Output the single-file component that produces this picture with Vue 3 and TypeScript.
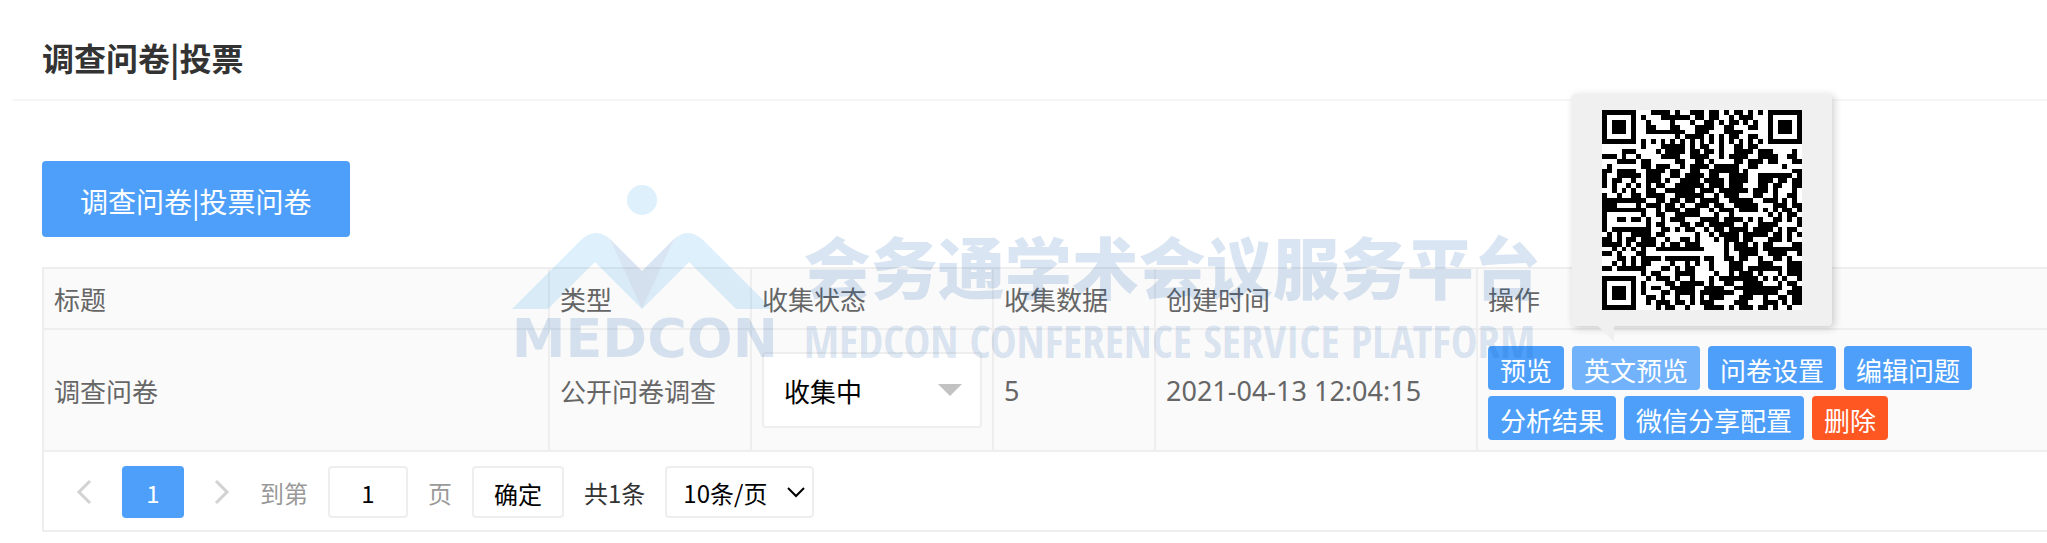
<script setup lang="ts">
import { ref } from 'vue'

const status = ref('收集中')
const pageSize = ref('10条/页')
const page = ref('1')

const headers = ['标题', '类型', '收集状态', '收集数据', '创建时间', '操作']

// One string per row of modules, # is dark
const qrRows: string[] = [
  '#######...####.#..###.##.#.##.#.#.#######',
  '#.....#.#...######.##.##..#.###...#.....#',
  '#.###.#..#....#...#..##.#.##.#.#..#.###.#',
  '#.###.#..##...##...####..##...##..#.###.#',
  '#.###.#..########..###...####.....#.###.#',
  '#.....#........#.####.#.#.##..##..#.....#',
  '#######.#.#.#.#.#.#.#.#.#.#.#.#.#.#######',
  '........#...#####.#.##..#..##.##.........',
  '....###....#.####.##.##.#..####.###....#.',
  '###.#..#....####..####..#.####..####..##.',
  '...####.##.....##..##.#....##.###.##...##',
  '.#......##.###..#.####.#####..##.....#...',
  '##.####..####.##..##..######.#.........##',
  '#..#####.###..##.####.##..####..#######.#',
  '#.##..#..###.#..####.####.####..###.##.##',
  '#.#..#.#.#.##..######.###.###...##.##..##',
  '..#.#.#..##..######.###.######.###.#...#.',
  '#..#..##.####..######..#.###...##..#..##.',
  '#########..##.##.##.####..#####..###.#.#.',
  '###....#.###.##.#..###.##..#####...###.##',
  '#########..#.###.###..#.###.####.#.#.##.#',
  '#.......#..##..#####...#..#.......#.#.##.',
  '#..##.##.#..#.###...####.####.#.#..##.#.#',
  '#........#.##...##.##.#####..#..####....#',
  '#.########..##.#.##..#.##.####.####.#.##.',
  '.#.#..####.##......#..#.####.#####.##.#.#',
  '##.#.##.###..#..##.#...#.###.##...###.#..',
  '####.#.####.#.##.###.....#.###.#.##....##',
  '..#.#.#.#..##########....#.#####.########',
  '##.#...##................#..####..####..#',
  '...##.#.####.#######.##..##.##..#..##.#..',
  '..#.#.#.##....#..#.#..#...###...###...###',
  '##.######...##.#.##...#...###.#######.###',
  '........#.##...####....#..#.###.#...#.###',
  '#######..#.###.#..#...#.########.#.#.#..#',
  '#.....#.#....##.#####.#..##..####...#.##.',
  '#.###.#.#.##..#####..####..##########..##',
  '#.###.#.#...##.####.#######..#######..###',
  '#.###.#..##.#..#..#.#.###...###..#..##.##',
  '#.....#..#.###.##.#.###....###...###.#.##',
  '#######....#.##..#...####.#.###.##.#..#..',
]

const qrPath = qrRows
  .map((row, y) =>
    [...row].map((m, x) => (m === '#' ? `M${x} ${y}h1v1h-1z` : '')).join(''),
  )
  .join('')
</script>

<template>
  <main class="page">
    <header class="head">
      <h1>调查问卷|投票</h1>
    </header>

    <section class="body">
      <button type="button" class="create">调查问卷|投票问卷</button>

      <table class="grid">
        <colgroup>
          <col class="c-title" />
          <col class="c-type" />
          <col class="c-status" />
          <col class="c-count" />
          <col class="c-time" />
          <col />
        </colgroup>
        <thead>
          <tr>
            <th v-for="h in headers" :key="h" scope="col">{{ h }}</th>
          </tr>
        </thead>
        <tbody>
          <tr>
            <td>调查问卷</td>
            <td>公开问卷调查</td>
            <td>
              <div class="pick status">
                <select v-model="status" aria-label="收集状态">
                  <option>收集中</option>
                </select>
                <svg width="24" height="12" viewBox="0 0 24 12" aria-hidden="true">
                  <path d="M0 0H24L12 12Z" fill="#c2c2c2" />
                </svg>
              </div>
            </td>
            <td class="latin">5</td>
            <td class="latin">2021-04-13 12:04:15</td>
            <td class="ops-cell">
              <div class="ops">
                <button type="button">预览</button>
                <div class="tip-anchor">
                  <button type="button" class="hover">英文预览</button>
                  <div class="tip" role="tooltip">
                    <svg class="qr" viewBox="0 0 41 41" shape-rendering="crispEdges" role="img" aria-label="二维码">
                      <rect width="41" height="41" fill="#fff" />
                      <path :d="qrPath" fill="#000" />
                    </svg>
                    <svg class="tail" width="16" height="16" viewBox="0 0 16 16" aria-hidden="true">
                      <path d="M0 0H16V16Z" fill="#f0f0f0" />
                    </svg>
                  </div>
                </div>
                <button type="button">问卷设置</button>
                <button type="button">编辑问题</button>
                <button type="button">分析结果</button>
                <button type="button">微信分享配置</button>
                <button type="button" class="danger">删除</button>
              </div>
            </td>
          </tr>
        </tbody>
      </table>

      <nav class="pager" aria-label="分页">
        <button type="button" class="arrow" aria-label="上一页">
          <svg width="16" height="26" viewBox="0 0 16 26" aria-hidden="true">
            <path d="M14 2L3 13L14 24" fill="none" stroke="#d2d2d2" stroke-width="3" />
          </svg>
        </button>
        <button type="button" class="current" aria-current="page">1</button>
        <button type="button" class="arrow" aria-label="下一页">
          <svg width="16" height="26" viewBox="0 0 16 26" aria-hidden="true">
            <path d="M2 2L13 13L2 24" fill="none" stroke="#d2d2d2" stroke-width="3" />
          </svg>
        </button>
        <label class="jump">
          <span>到第</span>
          <input v-model="page" type="text" />
          <span>页</span>
        </label>
        <button type="button" class="confirm">确定</button>
        <span class="total">共1条</span>
        <div class="pick size">
          <select v-model="pageSize" aria-label="每页条数">
            <option>10条/页</option>
          </select>
          <svg width="18" height="12" viewBox="0 0 18 12" aria-hidden="true">
            <path d="M1 1L9 9L17 1" fill="none" stroke="#000" stroke-width="2" />
          </svg>
        </div>
      </nav>
    </section>

    <div class="mark" aria-hidden="true">
      <div class="logo">
        <svg width="260" height="126" viewBox="0 0 260 126">
          <g fill="#008ce6" fill-opacity=".135">
            <circle cx="130" cy="15" r="15" />
            <path d="M0 124L70 54Q83 43 95 52Q99 56 103 65L130 124L83 77L36 124Z" />
            <path d="M260 124L190 54Q177 43 165 52Q161 56 157 65L130 124L177 77L224 124Z" />
          </g>
          <path
            d="M83 48Q91 48 98 54L130 86L162 54Q169 48 177 48Q168 48 163 54Q160 58 157 65L130 124L103 65Q100 58 97 54Q92 48 83 48Z"
            fill="#0050aa"
            fill-opacity=".15"
          />
        </svg>
        <span class="brand">MEDCON</span>
      </div>
      <div class="words">
        <span class="cn">会务通学术会议服务平台</span>
        <span class="en">MEDCON CONFERENCE SERVICE PLATFORM</span>
      </div>
    </div>
  </main>
</template>

<style>
body {
  margin: 0;
  background: #fff;
}
</style>

<style scoped>
.page {
  position: relative;
  box-sizing: border-box;
  overflow: hidden;
  padding: 0 0 10px 12px;
  font-family: 'Noto Sans CJK SC', 'Noto Sans', sans-serif;
  font-size: 26px;
  color: #666;
}
button,
select,
input {
  box-sizing: border-box;
  margin: 0;
  border: 0;
  border-radius: 4px;
  font: inherit;
}
.head {
  padding: 33px 30px 18px;
  border-bottom: 2px solid #f6f6f6;
}
h1 {
  margin: 0;
  font-size: 32px;
  line-height: 48px;
  font-weight: 700;
  color: #333;
}
.body {
  padding: 60px 0 0 30px;
}
.create {
  display: block;
  height: 76px;
  padding: 4px 38px 0;
  background: #4e9ffa;
  color: #fff;
  font-size: 28px;
}
.grid {
  width: 100%;
  margin-top: 30px;
  table-layout: fixed;
  border-spacing: 0;
}
.c-title {
  width: 506px;
}
.c-type {
  width: 202px;
}
.c-status {
  width: 242px;
}
.c-count {
  width: 162px;
}
.c-time {
  width: 322px;
}
th,
td {
  box-sizing: border-box;
  padding: 0 10px;
  border-top: 2px solid #eee;
  border-left: 2px solid #eee;
  background: #fafafa;
  text-align: left;
  font-weight: 400;
  white-space: nowrap;
}
th {
  height: 61px;
}
td {
  height: 122px;
}
td.latin {
  font-family: 'Noto Sans', sans-serif;
  font-size: 27px;
}
td.ops-cell {
  padding-top: 16px;
  padding-bottom: 10px;
}
.pick {
  position: relative;
}
.pick select {
  display: block;
  width: 100%;
  appearance: none;
  border: 2px solid #eee;
  background: #fff;
  color: #000;
}
.pick svg {
  position: absolute;
  pointer-events: none;
}
.status select {
  height: 76px;
  padding: 0 20px;
}
.status svg {
  top: 32px;
  right: 20px;
}
.ops {
  display: flex;
  flex-wrap: wrap;
  gap: 6px 8px;
}
.ops button {
  display: block;
  height: 44px;
  padding: 4px 12px 0;
  background: #4e9ffa;
  color: #fff;
  line-height: 38px;
}
.ops .hover {
  background: #71b2fb;
}
.ops .danger {
  background: #ff5722;
}
.tip-anchor {
  position: relative;
}
.tip {
  position: absolute;
  left: 0;
  bottom: 64px;
  z-index: 2;
  padding: 16px 30px;
  border-radius: 4px;
  background: #f0f0f0;
  box-shadow: 2px 2px 8px rgba(0, 0, 0, 0.2);
}
.qr {
  display: block;
  width: 200px;
  height: 200px;
}
.tail {
  position: absolute;
  top: 100%;
  left: 26px;
}
.pager {
  display: flex;
  align-items: center;
  gap: 20px;
  height: 76px;
  padding: 2px 0 0 32px;
  border: 2px solid #eee;
  border-right: 0;
  font-size: 24px;
  color: #999;
}
.pager button {
  height: 52px;
}
.pager .arrow {
  display: flex;
  align-items: center;
  padding: 0;
  background: none;
}
.pager .current {
  width: 62px;
  margin: 0 10px;
  background: #4e9ffa;
  color: #fff;
  padding: 0;
}
.jump {
  display: flex;
  align-items: center;
  gap: 20px;
  padding-left: 10px;
}
.jump input {
  width: 80px;
  height: 52px;
  border: 2px solid #eee;
  text-align: center;
  color: #000;
}
.pager .confirm {
  padding: 2px 20px 0;
  border: 2px solid #eee;
  background: #fff;
  color: #000;
}
.total {
  color: #333;
}
.size select {
  height: 52px;
  padding: 0 44px 0 16px;
}
.size svg {
  top: 21px;
  right: 9px;
}
.mark {
  position: absolute;
  top: 185px;
  left: 25%;
  z-index: 1;
  display: flex;
  gap: 28px;
  pointer-events: none;
  white-space: nowrap;
  color: rgba(0, 80, 170, 0.15);
}
.logo {
  width: 264px;
}
.logo svg {
  display: block;
}
.brand {
  display: block;
  font: 700 54px/56px 'DejaVu Sans', sans-serif;
}
.words {
  padding-top: 32px;
}
.cn {
  display: block;
  font-size: 67px;
  line-height: 96px;
  font-weight: 900;
}
.en {
  display: block;
  font: 700 45px/56px 'Open Sans Condensed', 'Liberation Sans Narrow', 'Roboto Condensed', sans-serif;
}
</style>
